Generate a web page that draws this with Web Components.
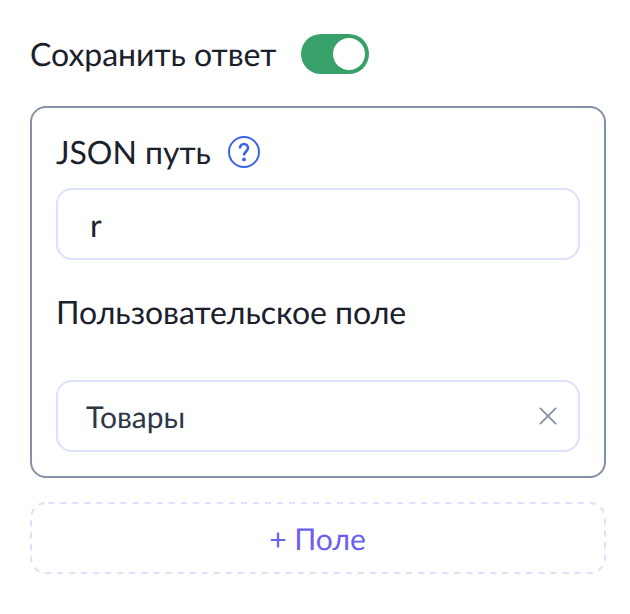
<!DOCTYPE html>
<html lang="ru">
<head>
<meta charset="UTF-8">
<title>Сохранить ответ</title>
<style>
	body {
		margin: 0;
		background: #fff;
		color: #1a202c;
		font-family: Lato, "Noto Sans", sans-serif;
		font-size: 32px;
		line-height: 39px;
		letter-spacing: -0.03px;
		text-rendering: geometricPrecision;
		-webkit-font-smoothing: antialiased;
	}
</style>
</head>
<body>
<response-form>
	<toggle-switch slot="header">Сохранить ответ</toggle-switch>
	<field-card>
		<field-label help>JSON путь</field-label>
		<text-field>r</text-field>
		<field-label class="second">Пользовательское поле</field-label>
		<select-field>Товары</select-field>
	</field-card>
	<add-button>+ Поле</add-button>
</response-form>

<script>
class BaseElement extends HTMLElement {
	constructor() {
		super();
		this.attachShadow({ mode: "open" });
	}
	connectedCallback() {
		const template = document.createElement("template");
		template.innerHTML = this.getStyles() + this.getTemplate();
		this.shadowRoot.replaceChildren(template.content.cloneNode(true));
	}
}

class ResponseForm extends BaseElement {
	getStyles() {
		return `
			<style>
				:host {
					display: flex;
					flex-direction: column;
					gap: 24px;
					width: 576px;
					padding: 34px 24px 40px 30px;
				}
				header {
					margin-bottom: 8px;
				}
			</style>
		`;
	}
	getTemplate() {
		return `<header><slot name="header"></slot></header><slot></slot>`;
	}
}

class ToggleSwitch extends BaseElement {
	getStyles() {
		return `
			<style>
				:host {
					display: flex;
					align-items: flex-start;
					height: 40px;
				}
				.text {
					width: 271px;
					white-space: nowrap;
				}
				.track {
					box-sizing: border-box;
					display: flex;
					justify-content: flex-end;
					width: 68px;
					height: 40px;
					padding: 4px;
					border-radius: 20px;
					background: #38a169;
				}
				.knob {
					width: 32px;
					height: 32px;
					border-radius: 50%;
					background: #fff;
				}
			</style>
		`;
	}
	getTemplate() {
		return `
			<span class="text"><slot></slot></span>
			<span class="track"><span class="knob"></span></span>
		`;
	}
}

class FieldCard extends BaseElement {
	getStyles() {
		return `
			<style>
				:host {
					box-sizing: border-box;
					display: flex;
					flex-direction: column;
					height: 372px;
					padding: 24px;
					border: 2px solid #8492a6;
					border-radius: 16px;
				}
				::slotted(.second) {
					margin: 32px 0 48px;
				}
			</style>
		`;
	}
	getTemplate() {
		return `<slot></slot>`;
	}
}

class FieldLabel extends BaseElement {
	getStyles() {
		return `
			<style>
				:host {
					display: flex;
					align-items: flex-start;
					gap: 17px;
					height: 40px;
				}
				:host([help]) {
					margin-bottom: 16px;
				}
				svg {
					display: block;
					margin-top: 4px;
				}
			</style>
		`;
	}
	getTemplate() {
		const icon = `
			<svg width="32" height="32" viewBox="0 0 32 32" fill="none" stroke="#3b63e8" stroke-width="2">
				<circle cx="16" cy="16" r="15"/>
				<path d="M12 12.4V12a4 4 0 0 1 8 0c0 3.2-4 3.4-4 7.6" stroke-width="2.6"/>
				<circle cx="16" cy="23.4" r="1.9" fill="#3b63e8" stroke="none"/>
			</svg>
		`;
		return `<span><slot></slot></span>${this.hasAttribute("help") ? icon : ""}`;
	}
}

class TextField extends BaseElement {
	getStyles() {
		return `
			<style>
				:host {
					box-sizing: border-box;
					display: flex;
					align-items: flex-start;
					flex: none;
					height: 72px;
					padding: 15px 32px 0;
					border: 2px solid #dbe2fb;
					border-radius: 16px;
				}
			</style>
		`;
	}
	getTemplate() {
		return `<slot></slot>`;
	}
}

class SelectField extends BaseElement {
	getStyles() {
		return `
			<style>
				:host {
					box-sizing: border-box;
					display: flex;
					align-items: center;
					justify-content: space-between;
					flex: none;
					height: 72px;
					padding: 0 21px 0 28px;
					border: 2px solid #dbe2fb;
					border-radius: 16px;
					color: #2d3748;
					font-size: 30px;
					line-height: 40px;
				}
				span {
					padding-top: 1px;
				}
			</style>
		`;
	}
	getTemplate() {
		return `
			<span><slot></slot></span>
			<svg width="18" height="18" viewBox="0 0 18 18" stroke="#8492a6" stroke-width="1.8" stroke-linecap="round">
				<path d="M1.4 1.4l15.2 15.2M16.6 1.4L1.4 16.6"/>
			</svg>
		`;
	}
}

class AddButton extends BaseElement {
	getStyles() {
		return `
			<style>
				:host {
					display: grid;
					place-items: center;
					height: 72px;
					color: #6b5ff0;
					font-size: 30px;
					line-height: 40px;
				}
				svg, span {
					grid-area: 1 / 1;
				}
				span {
					padding: 1px 1px 0 0;
				}
			</style>
		`;
	}
	// The outline is an svg so that the dashes keep an even 6px step
	getTemplate() {
		return `
			<svg width="576" height="72" viewBox="0 0 576 72" fill="none" stroke="#dbe0fc" stroke-width="2">
				<rect x="1" y="1" width="574" height="70" rx="15" stroke-dasharray="6 6.035" stroke-dashoffset="-2.3"/>
			</svg>
			<span><slot></slot></span>
		`;
	}
}

customElements.define("response-form", ResponseForm);
customElements.define("toggle-switch", ToggleSwitch);
customElements.define("field-card", FieldCard);
customElements.define("field-label", FieldLabel);
customElements.define("text-field", TextField);
customElements.define("select-field", SelectField);
customElements.define("add-button", AddButton);
</script>
</body>
</html>
